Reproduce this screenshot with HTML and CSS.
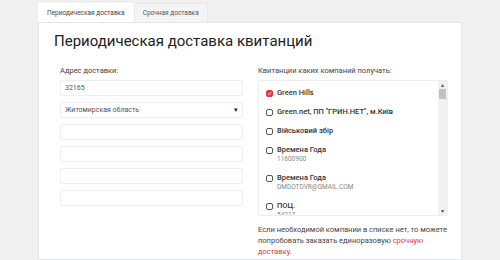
FILE: index.html
```html
<!DOCTYPE html>
<html lang="ru">
<head>
  <meta charset="UTF-8" />
  <title>Периодическая доставка</title>
  <link rel="stylesheet" href="styles.css">
</head>
<body>
  <div class="wrap">
    <div class="tabs">
      <a class="tab active">Периодическая доставка</a>
      <a class="tab">Срочная доставка</a>
    </div>
    <div class="card">
      <h1 class="title">Периодическая доставка квитанций</h1>
      <div class="cols">
        <div class="col">
          <div class="label">Адрес доставки:</div>
          <div class="field">32165</div>
          <div class="field select">Житомирская область <span class="caret">&#9662;</span></div>
          <div class="field"></div>
          <div class="field"></div>
          <div class="field"></div>
          <div class="field"></div>
        </div>
        <div class="col">
          <div class="label">Квитанции каких компаний получать:</div>
          <div class="listbox">
            <div class="list">
              <div class="item"><span class="box checked"><svg viewBox="0 0 8 8" width="7" height="7"><path d="M1.5 4.2 L3.3 5.9 L6.6 2" fill="none" stroke="#fff" stroke-width="1.4"/></svg></span><div><div class="name">Green Hills</div></div></div>
              <div class="item"><span class="box"></span><div><div class="name">Green.net, ПП "ГРИН.НЕТ", м.Київ</div></div></div>
              <div class="item"><span class="box"></span><div><div class="name">Військовий збір</div></div></div>
              <div class="item"><span class="box"></span><div><div class="name">Времена Года</div><div class="sub">11600900</div></div></div>
              <div class="item"><span class="box"></span><div><div class="name">Времена Года</div><div class="sub">DMDOTDVR@GMAIL.COM</div></div></div>
              <div class="item"><span class="box"></span><div><div class="name">ПОЦ.</div><div class="sub">54217</div></div></div>
            </div>
            <div class="scrollbar">
              <span class="arrow">&#9652;</span>
              <span class="thumb"></span>
              <span class="track"></span>
              <span class="arrow">&#9662;</span>
            </div>
          </div>
          <p class="note">Если необходимой компании в списке нет, то можете попробовать заказать единоразовую <a class="red">срочную доставку</a>.</p>
        </div>
      </div>
    </div>
  </div>
</body>
</html>
```

FILE: styles.css
```css
body, html {
  margin: 0;
  padding: 0;
  background: #f0f0f0;
  font-family: Roboto, 'Noto Sans', sans-serif;
  color: #333;
  overflow: hidden;
  height: 260px;
}
.wrap {
  margin: 3px 0 0 38px;
  width: 424px;
}
.tabs {
  display: flex;
}
.tab {
  height: 19px;
  line-height: 19px;
  padding: 0 8px;
  font-size: 6.5px;
  color: #555;
  background: #f4f4f4;
  border: 1px solid #e8e8ec;
  border-bottom: none;
  box-sizing: border-box;
}
.tab.active {
  background: #fff;
  border-color: #fff;
  color: #444;
}
.card {
  background: #fff;
  border: 1px solid #e4e6ef;
  box-shadow: 0 0 2px #e8eaf2;
  height: 238px;
  box-sizing: border-box;
  padding: 0 13px 0 21px;
}
.title {
  font-size: 15px;
  font-weight: 400;
  color: #222;
  margin: 6px 0 0 -6px;
  line-height: 24px;
}
.cols {
  display: grid;
  grid-template-columns: 183px 190px;
  column-gap: 15px;
  margin-top: 13px;
}
.label {
  font-size: 7.5px;
  color: #444;
  line-height: 10px;
  margin-bottom: 4px;
}
.field {
  height: 16px;
  border: 1px solid #eceef2;
  border-radius: 2px;
  box-sizing: border-box;
  margin-bottom: 6px;
  font-size: 7px;
  line-height: 14px;
  padding: 0 4px;
  color: #555;
  display: flex;
  justify-content: space-between;
}
.caret {
  font-size: 7px;
  color: #222;
}
.listbox {
  display: flex;
  height: 136px;
  border: 1px solid #eceef2;
  border-radius: 2px;
  box-sizing: border-box;
}
.list {
  flex: 1;
  overflow: hidden;
  padding: 7px 0 0 7px;
}
.item {
  display: flex;
  align-items: flex-start;
  margin-bottom: 9px;
}
.box {
  width: 5px;
  height: 5px;
  border: 1px solid #555;
  border-radius: 2px;
  margin: 2px 4px 0 0;
  flex: none;
  display: flex;
  align-items: center;
  justify-content: center;
}
.box.checked {
  background: #e8363c;
  border-color: #e8363c;
}
.name {
  font-size: 7.5px;
  font-weight: 500;
  color: #333;
  line-height: 10px;
}
.sub {
  font-size: 6.5px;
  color: #888;
  line-height: 9px;
}
.scrollbar {
  width: 9px;
  background: #f1f1f1;
  display: flex;
  flex-direction: column;
  align-items: center;
}
.arrow {
  font-size: 6px;
  line-height: 8px;
  color: #555;
}
.thumb {
  width: 7px;
  height: 10px;
  background: #c1c1c1;
}
.track {
  flex: 1;
}
.note {
  font-size: 7.5px;
  line-height: 11px;
  color: #444;
  margin: 8px 0 0;
}
.red {
  color: #e8363c;
}
```
